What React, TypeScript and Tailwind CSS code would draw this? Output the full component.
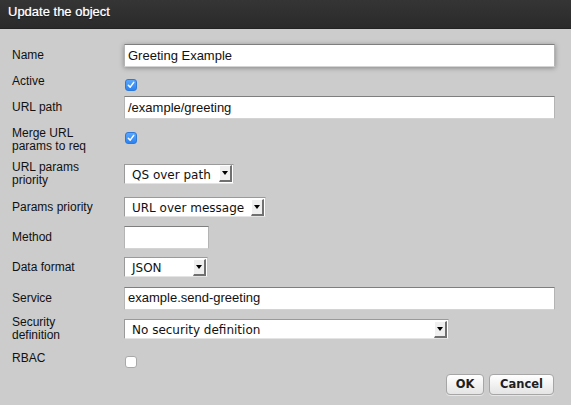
import React from "react";

const labelFont = { fontFamily: '"Liberation Sans", Arial, sans-serif' };
const selectFont = { fontFamily: '"DejaVu Sans", Verdana, sans-serif' };

function Label({ children }: { children: React.ReactNode }) {
  return (
    <div className="w-[90px] mr-[22px] shrink-0 text-[12px] leading-[13px] text-[#111]" style={labelFont}>
      {children}
    </div>
  );
}

function TextInput({ value, width, focused }: { value: string; width: string; focused?: boolean }) {
  return (
    <div
      className={`${width} h-[23px] bg-white border border-[#b4b4b4] border-t-[#7e7e7e] border-b-[#d4d4d4] flex items-center pl-[3px] text-[13px] text-[#111] ${
        focused ? "shadow-[0_1px_5px_rgba(0,0,0,0.35)]" : ""
      }`}
      style={labelFont}
    >
      {value}
    </div>
  );
}

function Select({ value, width }: { value: string; width: string }) {
  return (
    <div
      className={`${width} h-[20px] bg-white border border-[#9a9a9a] border-b-[#e4e4e4] border-r-[#c8c8c8] flex items-center`}
      style={selectFont}
    >
      <span className="pl-[7px] pt-[2px] text-[12px] leading-[14px] text-[#111] flex-1 whitespace-nowrap overflow-hidden">
        {value}
      </span>
      <div className="w-[13px] h-[17px] mr-[1px] bg-[#efefef] border-t border-l border-t-white border-l-white border-r-2 border-b-2 border-r-[#707070] border-b-[#707070] flex items-center justify-center shrink-0">
        <div className="w-0 h-0 border-l-[3px] border-r-[3px] border-t-[4px] border-l-transparent border-r-transparent border-t-black" />
      </div>
    </div>
  );
}

function Checkbox({ checked, className = "" }: { checked: boolean; className?: string }) {
  return checked ? (
    <div
      className={`w-[12px] h-[12px] rounded-[3px] bg-gradient-to-b from-[#5aa6fb] to-[#2a83f2] border border-[#2d78d8] flex items-center justify-center ${className}`}
    >
      <svg width="8" height="8" viewBox="0 0 8 8">
        <path d="M1.3 4.2 L3.2 6.1 L6.7 1.4" fill="none" stroke="white" strokeWidth="1.5" strokeLinecap="round" strokeLinejoin="round" />
      </svg>
    </div>
  ) : (
    <div className={`w-[12px] h-[12px] rounded-[3px] bg-white border border-[#a9a9a9] ${className}`} />
  );
}

function Row({ h, children }: { h: string; children: React.ReactNode }) {
  return <div className={`flex items-center ${h}`}>{children}</div>;
}

function Button({ children, width }: { children: React.ReactNode; width: string }) {
  return (
    <div
      className={`${width} h-[21px] rounded-[4px] border border-[#a6a6a6] bg-gradient-to-b from-white to-[#e4e4e4] flex items-center justify-center text-[11.5px] font-bold text-[#1e1e1e] shadow-[0_1px_0_rgba(255,255,255,0.5)]`}
      style={selectFont}
    >
      {children}
    </div>
  );
}

export default function App() {
  return (
    <div className="w-[571px] h-[405px] bg-[#cccccc] overflow-hidden">
      <div className="h-[29px] bg-gradient-to-b from-[#353535] to-[#2a2a2a] border-b border-[#222] pl-[8px] pt-[4px]">
        <div
          className="text-[13px] leading-[16px] text-white [text-shadow:0_0_1px_rgba(255,255,255,0.7),0_1px_1px_rgba(0,0,0,0.8)]"
          style={labelFont}
        >
          Update the object
        </div>
      </div>

      <div className="pl-[12px] pt-[13px]">
        <Row h="h-[27px]">
          <Label>Name</Label>
          <TextInput value="Greeting Example" width="w-[431px]" focused />
        </Row>
        <Row h="h-[24px]">
          <Label>Active</Label>
          <Checkbox checked className="mt-[8px] ml-[1px]" />
        </Row>
        <Row h="h-[29px]">
          <Label>URL path</Label>
          <TextInput value="/example/greeting" width="w-[431px]" />
        </Row>
        <Row h="h-[36px]">
          <Label>Merge URL params to req</Label>
          <Checkbox checked className="mb-[4px] ml-[1px]" />
        </Row>
        <Row h="h-[31px]">
          <Label>URL params priority</Label>
          <Select value="QS over path" width="w-[110px]" />
        </Row>
        <Row h="h-[36px]">
          <Label>Params priority</Label>
          <Select value="URL over message" width="w-[142px]" />
        </Row>
        <Row h="h-[24px]">
          <Label>Method</Label>
          <TextInput value="" width="w-[85px]" />
        </Row>
        <Row h="h-[36px]">
          <Label>Data format</Label>
          <Select value="JSON" width="w-[84px]" />
        </Row>
        <Row h="h-[26px]">
          <Label>Service</Label>
          <TextInput value="example.send-greeting" width="w-[431px]" />
        </Row>
        <Row h="h-[36px]">
          <Label>Security definition</Label>
          <Select value="No security definition" width="w-[325px]" />
        </Row>
        <Row h="h-[22px]">
          <Label>RBAC</Label>
          <Checkbox checked={false} className="mt-[8px] ml-[1px]" />
        </Row>
        <div className="flex justify-end gap-[5px] pr-[17px] mt-[5px]">
          <Button width="w-[38px]">OK</Button>
          <Button width="w-[65px]">Cancel</Button>
        </div>
      </div>
    </div>
  );
}
